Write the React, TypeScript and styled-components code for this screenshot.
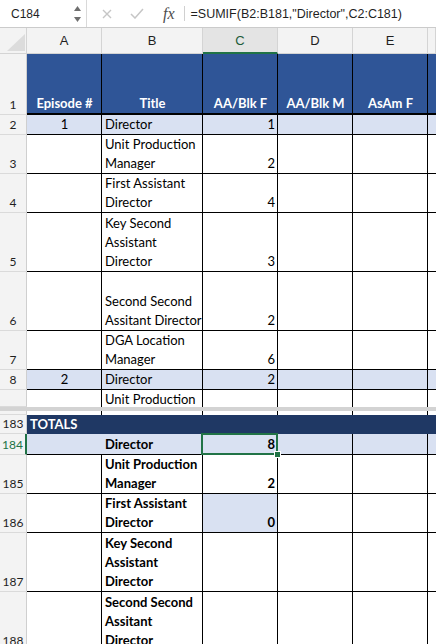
import React from 'react';
import styled, { createGlobalStyle } from 'styled-components';

const GRID = '27px 75px 101px 75px 75px 75px 1fr';
const BLUE = '#2F5597';
const NAVY = '#1F3864';
const LIGHT = '#D9E1F2';
const GREEN = '#217346';

const GlobalStyle = createGlobalStyle`
  html, body { margin: 0; padding: 0; background: #fff; }
  body { overflow: hidden; }
  #root { width: 436px; height: 644px; }
`;

const Screen = styled.div`
  width: 436px;
  height: 644px;
  overflow: hidden;
  background: #fff;
  display: flex;
  flex-direction: column;
  font-family: Lato, "Open Sans", sans-serif;
`;

const FormulaBar = styled.div`
  flex: none;
  height: 28px;
  box-sizing: border-box;
  border-bottom: 1px solid #cbcbcb;
  display: flex;
  align-items: center;
  font-family: "Liberation Sans", Arial, sans-serif;
  color: #1f1f1f;
`;

const NameBox = styled.div`
  width: 87px;
  height: 100%;
  box-sizing: border-box;
  border-right: 1px solid #d9d9d9;
  display: flex;
  align-items: center;
  justify-content: space-between;
  padding: 0 5px 0 11px;
  font-size: 12px;
`;

const ActionIcon = styled.svg<{ $gap: number }>`
  flex: none;
  margin-left: ${(p) => p.$gap}px;
`;

const Fx = styled.span`
  margin-left: 19px;
  font-family: "Liberation Serif", "Times New Roman", serif;
  font-style: italic;
  font-size: 16px;
  color: #4d4d4d;
`;

const BarDivider = styled.div`
  margin-left: 9px;
  width: 1px;
  height: 15px;
  background: #d0d0d0;
`;

const FormulaText = styled.div`
  margin-left: 6px;
  font-size: 12.5px;
  white-space: nowrap;
`;

const ColHeaderRow = styled.div`
  flex: none;
  display: grid;
  grid-template-columns: ${GRID};
  height: 26px;
  background: #f3f3f3;
`;

const Corner = styled.div`
  box-sizing: border-box;
  border-right: 1px solid #d4d4d4;
  border-bottom: 1px solid #d4d4d4;
  display: flex;
  align-items: flex-end;
  justify-content: flex-end;
  padding: 0 1px 2px 0;
`;

const ColHead = styled.div<{ $active?: boolean }>`
  box-sizing: border-box;
  border-right: 1px solid #d4d4d4;
  border-bottom: ${(p) => (p.$active ? `2px solid ${GREEN}` : '1px solid #d4d4d4')};
  background: ${(p) => (p.$active ? '#e4e4e4' : '#f3f3f3')};
  color: ${(p) => (p.$active ? '#1d5c39' : '#1f1f1f')};
  font-family: "Liberation Sans", Arial, sans-serif;
  font-size: 13px;
  display: flex;
  align-items: center;
  justify-content: center;
  padding-top: ${(p) => (p.$active ? 1 : 0)}px;
`;

const Row = styled.div<{ $h: number }>`
  flex: none;
  display: grid;
  grid-template-columns: ${GRID};
  height: ${(p) => p.$h}px;
`;

const RowNum = styled.div<{ $active?: boolean }>`
  box-sizing: border-box;
  background: #f3f3f3;
  border-right: ${(p) => (p.$active ? `2px solid ${GREEN}` : '1px solid #cfcfcf')};
  border-bottom: 1px solid #dadada;
  color: ${(p) => (p.$active ? GREEN : '#1f1f1f')};
  font-size: 12px;
  line-height: 19px;
  text-align: center;
  display: flex;
  flex-direction: column;
  justify-content: flex-end;
  overflow: hidden;
`;

type CellProps = {
  $bg?: string;
  $align?: 'left' | 'center' | 'right';
  $bold?: boolean;
  $light?: boolean;
  $noRight?: boolean;
  $noBottom?: boolean;
  $thickBottom?: boolean;
  $top?: boolean;
};

const Cell = styled.div<CellProps>`
  box-sizing: border-box;
  min-width: 0;
  overflow: hidden;
  background: ${(p) => p.$bg ?? '#fff'};
  border-right: ${(p) => (p.$noRight ? 'none' : '1px solid #000')};
  border-bottom: ${(p) =>
    p.$noBottom ? 'none' : p.$thickBottom ? '2px solid #000' : '1px solid #000'};
  display: flex;
  flex-direction: column;
  justify-content: ${(p) => (p.$top ? 'flex-start' : 'flex-end')};
  text-align: ${(p) => p.$align ?? 'left'};
  padding: 0 2px 0 3px;
  font-size: 13px;
  line-height: 19px;
  font-weight: ${(p) => (p.$bold ? 700 : 400)};
  color: ${(p) => (p.$light ? '#fff' : '#000')};
  white-space: nowrap;
`;

const SelectedCell = styled(Cell)`
  position: relative;
  overflow: visible;
  z-index: 2;
  &::after {
    content: '';
    position: absolute;
    left: -2px;
    top: -1px;
    right: -1px;
    bottom: -1px;
    border: 2px solid ${GREEN};
    pointer-events: none;
  }
  &::before {
    content: '';
    position: absolute;
    right: -3px;
    bottom: -3px;
    width: 5px;
    height: 5px;
    background: ${GREEN};
    outline: 1px solid #fff;
    z-index: 3;
  }
`;

const Line = styled.span`
  display: block;
`;

const Splitter = styled.div`
  flex: none;
  height: 4px;
  background: #d3d3d3;
`;

const TotalsBar = styled.div`
  grid-column: 2 / -1;
  background: ${NAVY};
  color: #fff;
  font-weight: 700;
  font-size: 13px;
  line-height: 19px;
  padding-left: 3px;
`;

type DataRow = {
  n: string;
  h: number;
  a?: string;
  b: string[];
  c?: string;
  fill?: boolean;
  cFill?: boolean;
  top?: boolean;
  open?: boolean;
};

const topRows: DataRow[] = [
  { n: '2', h: 20, a: '1', b: ['Director'], c: '1', fill: true },
  { n: '3', h: 39, b: ['Unit Production', 'Manager'], c: '2' },
  { n: '4', h: 39, b: ['First Assistant', 'Director'], c: '4' },
  { n: '5', h: 59, b: ['Key Second', 'Assistant', 'Director'], c: '3' },
  { n: '6', h: 59, b: ['Second Second', 'Assitant Director'], c: '2' },
  { n: '7', h: 39, b: ['DGA Location', 'Manager'], c: '6' },
  { n: '8', h: 20, a: '2', b: ['Director'], c: '2', fill: true },
  { n: '', h: 17, b: ['Unit Production'], top: true, open: true },
];

const totalRows: DataRow[] = [
  { n: '185', h: 39, b: ['Unit Production', 'Manager'], c: '2' },
  { n: '186', h: 39, b: ['First Assistant', 'Director'], c: '0', cFill: true },
  { n: '187', h: 59, b: ['Key Second', 'Assistant', 'Director'] },
  { n: '188', h: 59, b: ['Second Second', 'Assitant', 'Director'] },
];

const headers = ['Episode #', 'Title', 'AA/Blk F', 'AA/Blk M', 'AsAm F', ''];

function DataRowView({ r, bold }: { r: DataRow; bold?: boolean }) {
  const bg = r.fill ? LIGHT : undefined;
  return (
    <Row $h={r.h}>
      <RowNum>{r.n}</RowNum>
      <Cell $bg={bg} $align="center" $noBottom={r.open} $top={r.top}>
        {r.a}
      </Cell>
      <Cell $bg={bg} $bold={bold} $noBottom={r.open} $top={r.top}>
        {r.b.map((t) => (
          <Line key={t}>{t}</Line>
        ))}
      </Cell>
      <Cell $bg={r.cFill ? LIGHT : bg} $align="right" $bold={bold} $noBottom={r.open} $top={r.top}>
        {r.c}
      </Cell>
      <Cell $bg={bg} $noBottom={r.open} />
      <Cell $bg={bg} $noBottom={r.open} />
      <Cell $bg={bg} $noRight $noBottom={r.open} />
    </Row>
  );
}

export default function App() {
  return (
    <Screen>
      <GlobalStyle />
      <FormulaBar>
        <NameBox>
          <span>C184</span>
          <svg width="7" height="16" viewBox="0 0 7 16">
            <polygon points="0,5 7,5 3.5,0" fill="#6e6e6e" />
            <polygon points="0,11 7,11 3.5,16" fill="#6e6e6e" />
          </svg>
        </NameBox>
        <ActionIcon $gap={15} width="10" height="10" viewBox="0 0 10 10">
          <path d="M1 1 L9 9 M9 1 L1 9" stroke="#c6c6c6" strokeWidth="1.4" fill="none" />
        </ActionIcon>
        <ActionIcon $gap={18} width="14" height="11" viewBox="0 0 14 11">
          <polyline points="1,6 5,10 13,1" stroke="#c6c6c6" strokeWidth="1.5" fill="none" />
        </ActionIcon>
        <Fx>fx</Fx>
        <BarDivider />
        <FormulaText>=SUMIF(B2:B181,"Director",C2:C181)</FormulaText>
      </FormulaBar>

      <ColHeaderRow>
        <Corner>
          <svg width="18" height="17" viewBox="0 0 18 17">
            <polygon points="18,0 18,17 0,17" fill="#dcdcdc" />
          </svg>
        </Corner>
        <ColHead>A</ColHead>
        <ColHead>B</ColHead>
        <ColHead $active>C</ColHead>
        <ColHead>D</ColHead>
        <ColHead>E</ColHead>
        <ColHead />
      </ColHeaderRow>

      <Row $h={61}>
        <RowNum>1</RowNum>
        {headers.map((h, i) => (
          <Cell key={i} $bg={BLUE} $light $bold $align="center" $thickBottom $noRight={i === 5}>
            {h}
          </Cell>
        ))}
      </Row>

      {topRows.map((r, i) => (
        <DataRowView key={i} r={r} />
      ))}

      <Splitter />

      <Row $h={4}>
        <RowNum />
        <Cell $noBottom />
        <Cell $noBottom />
        <Cell $noBottom />
        <Cell $noBottom />
        <Cell $noBottom />
        <Cell $noBottom $noRight />
      </Row>

      <Row $h={19}>
        <RowNum>183</RowNum>
        <TotalsBar>TOTALS</TotalsBar>
      </Row>

      <Row $h={21}>
        <RowNum $active>184</RowNum>
        <Cell $bg={LIGHT} $noRight />
        <Cell $bg={LIGHT} $bold>
          <Line>Director</Line>
        </Cell>
        <SelectedCell $bg={LIGHT} $bold $align="right">
          8
        </SelectedCell>
        <Cell $bg={LIGHT} />
        <Cell $bg={LIGHT} />
        <Cell $bg={LIGHT} $noRight />
      </Row>

      {totalRows.map((r, i) => (
        <DataRowView key={i} r={r} bold />
      ))}
    </Screen>
  );
}
